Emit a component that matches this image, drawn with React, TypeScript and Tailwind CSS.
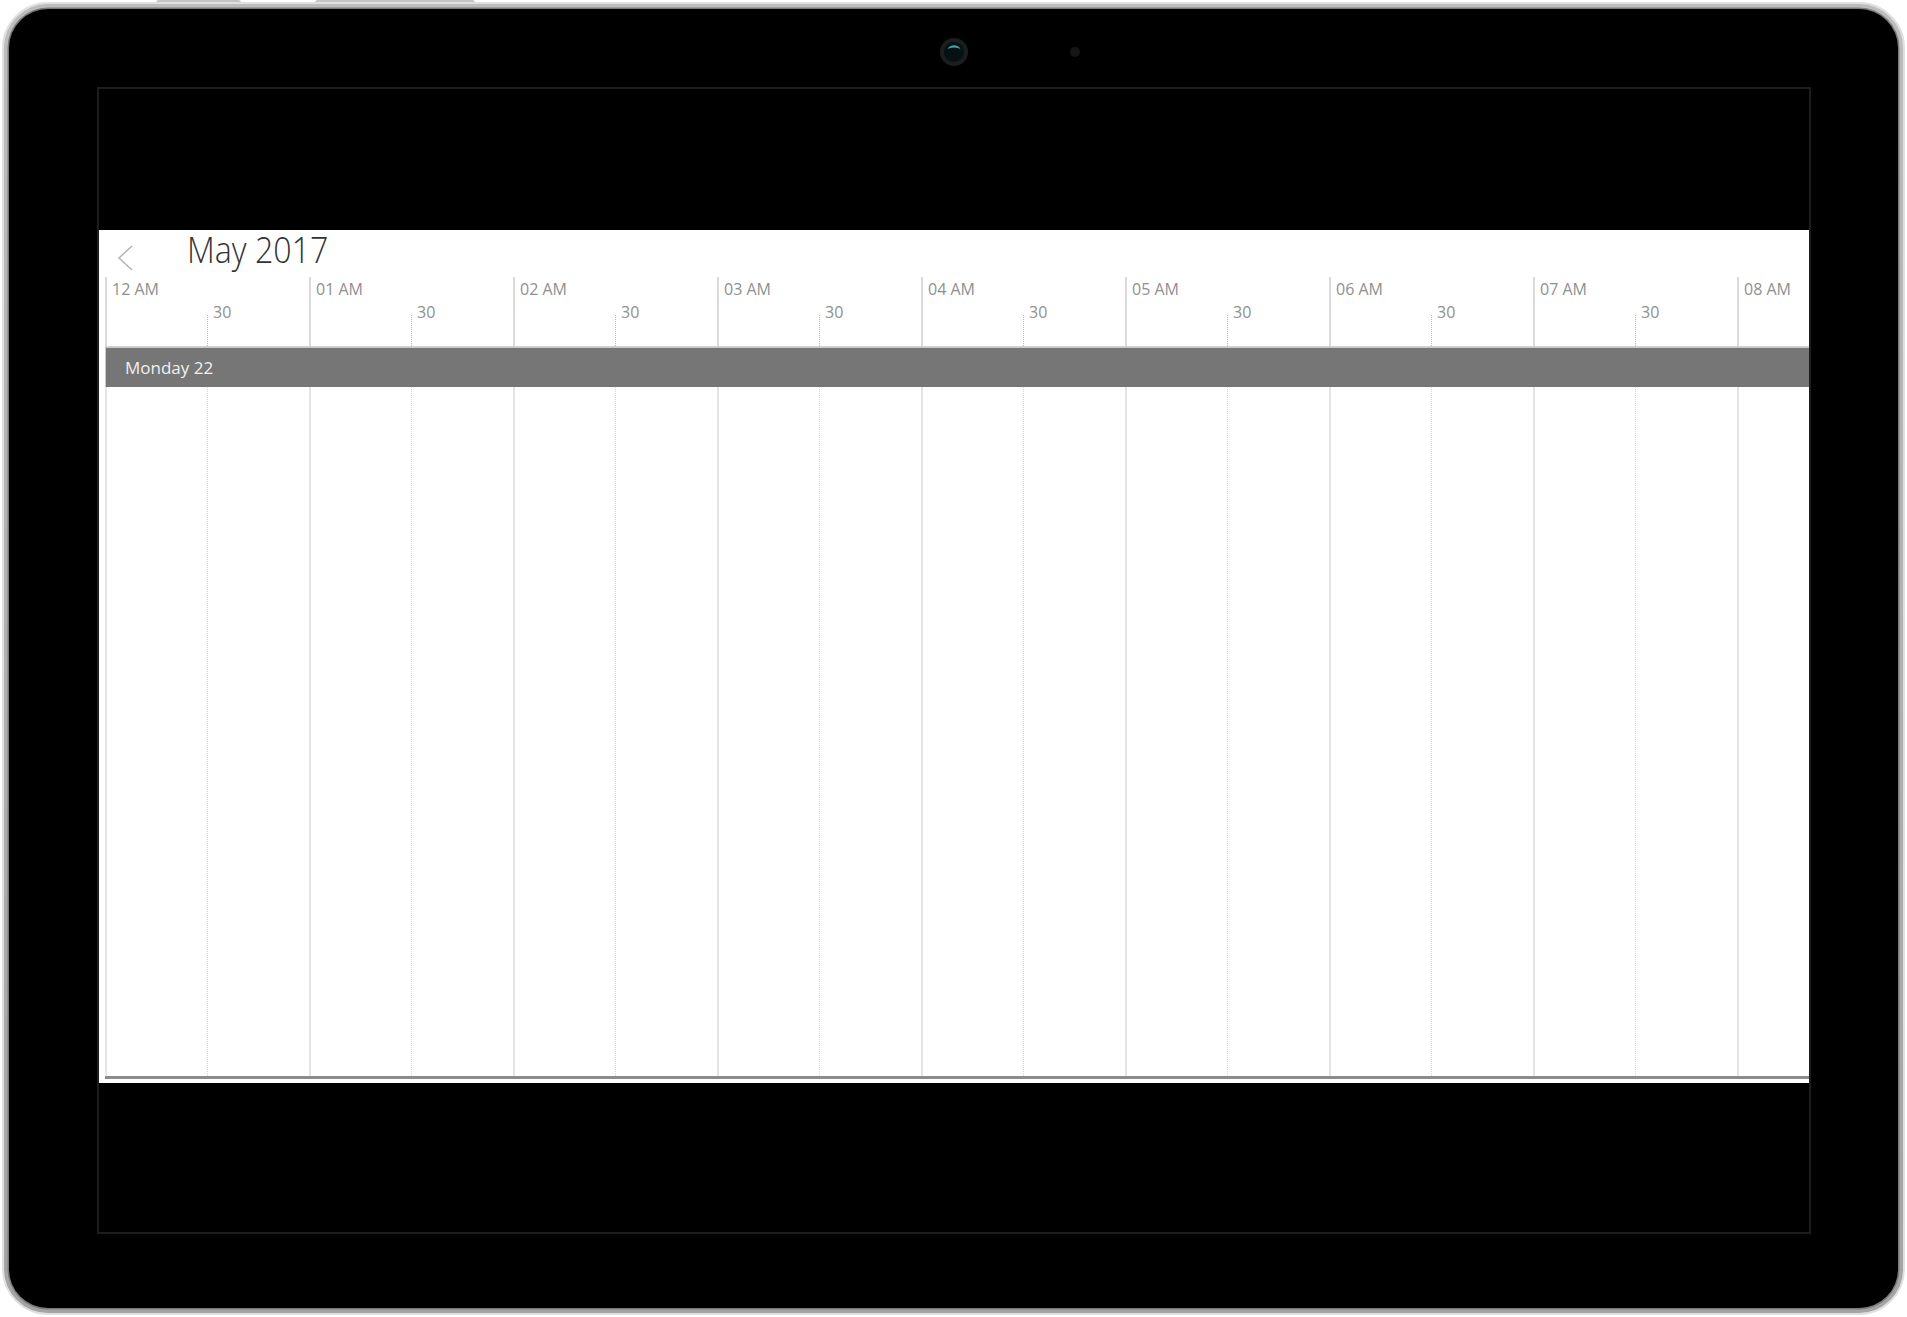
import React from 'react';

const hours = ['12 AM', '01 AM', '02 AM', '03 AM', '04 AM', '05 AM', '06 AM', '07 AM', '08 AM'];

const font = { fontFamily: '"Segoe UI", "Open Sans", "Noto Sans", sans-serif' };

function Camera() {
  return (
    <svg width="30" height="30" viewBox="0 0 30 30">
      <circle cx="15" cy="15" r="14" fill="#1b1e21" />
      <circle cx="15" cy="15" r="10" fill="#071012" />
      <path d="M8.5 12 A7.5 7.5 0 0 1 21.5 12 A9 5 0 0 0 8.5 12 Z" fill="#3fa3a3" />
    </svg>
  );
}

function TimeHeader() {
  return (
    <div className="flex h-[70px] overflow-hidden border-b border-[#d2d2d2]">
      {hours.map((h, i) => (
        <div key={h} className="flex w-[204px] shrink-0">
          <div className="w-[102px] border-l-2 border-[#dadada] pl-[5px]">
            <span className="text-[16px] leading-none text-[#8f8f8f]">{h}</span>
          </div>
          {i < hours.length - 1 && (
            <div className="flex w-[102px]">
              <div className="h-[31px] self-end border-l border-dotted border-[#bdbdbd]" />
              <span className="ml-[5px] mt-[27px] text-[16px] leading-none text-[#8f8f8f]">30</span>
            </div>
          )}
        </div>
      ))}
    </div>
  );
}

function DayBar() {
  return (
    <div className="flex h-[40px] items-center border-l border-t border-[#c8c8c8] bg-[#767676] pl-[19px]">
      <span className="text-[17px] leading-none text-[#f0f0f0]">Monday 22</span>
    </div>
  );
}

function Grid() {
  return (
    <div className="flex flex-1 overflow-hidden">
      {hours.map((h) => (
        <div key={h} className="flex w-[204px] shrink-0">
          <div className="w-[102px] border-l-2 border-[#e4e4e4]" />
          <div className="w-[102px] border-l border-dotted border-[#d6d6d6]" />
        </div>
      ))}
    </div>
  );
}

export default function App() {
  return (
    <div className="relative h-[1317px] w-[1907px] bg-white p-[2px]" style={font}>
      {/* buttons on the top edge of the device */}
      <div className="absolute left-[156px] top-0 h-[4px] w-[85px] rounded-t-[3px] bg-[#c4c4c4]" />
      <div className="absolute left-[315px] top-0 h-[4px] w-[160px] rounded-t-[3px] bg-[#c4c4c4]" />

      <div className="relative h-full rounded-[46px] border-2 border-[#e0e0e0] bg-gradient-to-b from-[#bdbdbd] to-[#a4a4a4] p-[5px]">
        <div className="flex h-full flex-col rounded-[39px] bg-black pb-[74px] pl-[88px] pr-[87px] ring-[1.5px] ring-[#7a7a7a]">
          <div className="flex h-[78px] shrink-0 items-start justify-center pt-[28px]">
            <div className="flex h-[30px] w-[252px] items-center">
              <div className="flex-1" />
              <Camera />
              <div className="flex flex-1 justify-end">
                <div className="h-[10px] w-[10px] rounded-full bg-[#161616]" />
              </div>
            </div>
          </div>

          <div className="flex flex-1 flex-col border-2 border-[#1d1d1d] bg-black">
            <div className="mt-[141px] flex h-[853px] flex-col bg-white">
              <div className="flex h-[47px] shrink-0 items-start">
                <svg className="ml-[18px] mt-[15px]" width="16" height="26" viewBox="0 0 16 26">
                  <path d="M15 1 L2 13 L15 25" fill="none" stroke="#b3b3b3" strokeWidth="1.5" />
                </svg>
                <span className="ml-[54px] origin-left scale-x-[0.87] text-[37px] font-light leading-none text-[#333333]">
                  May 2017
                </span>
              </div>

              <div className="flex flex-1 flex-col pb-[4px] pl-[6px]">
                <TimeHeader />
                <DayBar />
                <Grid />
                <div className="h-[3px] shrink-0 bg-[#8c8c8c]" />
              </div>
            </div>
          </div>
        </div>
      </div>
    </div>
  );
}
